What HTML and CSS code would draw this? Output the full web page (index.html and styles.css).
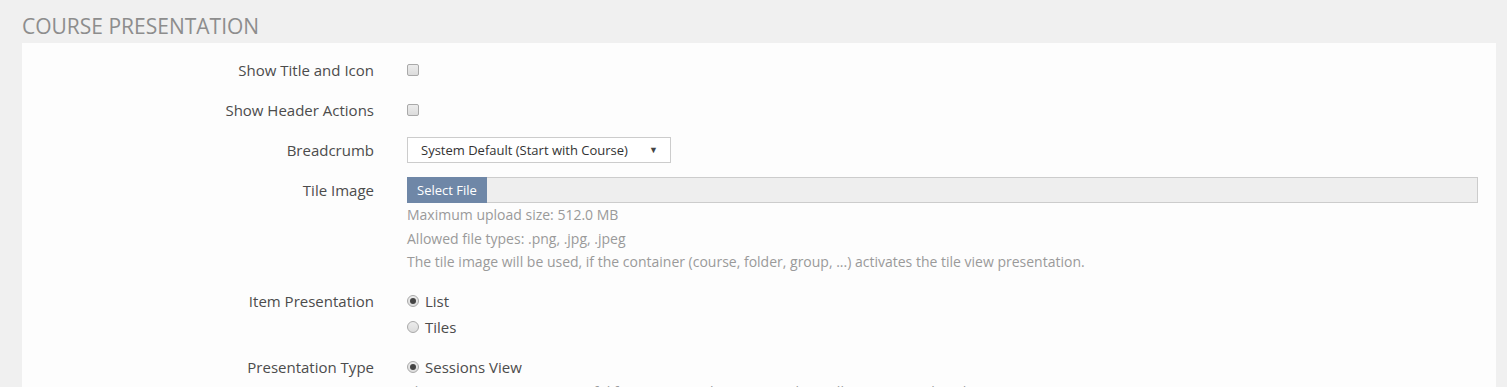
FILE: index.html
```html
<!DOCTYPE html>
<html lang="en">
<head>
    <meta charset="UTF-8">
    <title>Course Presentation</title>
    <link rel="stylesheet" href="styles.css">
</head>
<body>
    <div class="page">
        <h2 class="section-title">Course Presentation</h2>
        <div class="panel">
            <div class="form-row">
                <label class="form-label" for="show-title">Show Title and Icon</label>
                <div class="form-control"><input type="checkbox" id="show-title"></div>
            </div>
            <div class="form-row">
                <label class="form-label" for="show-actions">Show Header Actions</label>
                <div class="form-control"><input type="checkbox" id="show-actions"></div>
            </div>
            <div class="form-row">
                <label class="form-label" for="breadcrumb">Breadcrumb</label>
                <div class="form-control">
                    <div class="select-box" id="breadcrumb">
                        <span>System Default (Start with Course)</span>
                        <span class="select-arrow">&#9660;</span>
                    </div>
                </div>
            </div>
            <div class="form-row">
                <label class="form-label">Tile Image</label>
                <div class="form-control">
                    <div class="file-input">
                        <span class="file-button">Select File</span>
                        <span class="file-name"></span>
                    </div>
                    <div class="help">Maximum upload size: 512.0 MB</div>
                    <div class="help">Allowed file types: .png, .jpg, .jpeg</div>
                    <div class="help">The tile image will be used, if the container (course, folder, group, ...) activates the tile view presentation.</div>
                </div>
            </div>
            <div class="form-row">
                <label class="form-label">Item Presentation</label>
                <div class="form-control">
                    <label class="radio"><input type="radio" name="item-pres" checked> List</label>
                    <label class="radio"><input type="radio" name="item-pres"> Tiles</label>
                </div>
            </div>
            <div class="form-row">
                <label class="form-label">Presentation Type</label>
                <div class="form-control">
                    <label class="radio"><input type="radio" name="pres-type" checked> Sessions View</label>
                    <div class="help">This presentation type is useful for courses with sessions, where all sessions are listed.</div>
                </div>
            </div>
        </div>
    </div>
</body>
</html>
```

FILE: styles.css
```css
* {
    margin: 0;
    padding: 0;
    box-sizing: border-box;
}
body {
    font-family: 'Open Sans', sans-serif;
    background-color: #f0f0f0;
    color: #4a4a4a;
    height: 387px;
    overflow: hidden;
}
.page {
    padding: 0 11px 0 22px;
}
.section-title {
    font-size: 21px;
    font-weight: normal;
    text-transform: uppercase;
    color: #8d8d8d;
    line-height: 28px;
    padding-top: 12px;
    padding-bottom: 3px;
}
.panel {
    background-color: #fdfdfd;
    padding: 14px 18px 0 0;
    display: flex;
    flex-direction: column;
    gap: 14px;
}
.form-row {
    display: grid;
    grid-template-columns: 352px 1fr;
    column-gap: 33px;
    align-items: start;
}
.form-label {
    text-align: right;
    font-size: 15px;
    line-height: 26px;
    color: #4c4c4c;
}
.form-control {
    font-size: 15px;
    line-height: 26px;
    min-height: 26px;
}
/* grey rounded controls */
input[type="checkbox"],
input[type="radio"] {
    appearance: none;
    -webkit-appearance: none;
    width: 12px;
    height: 12px;
    border: 1px solid #a9a9a9;
    background: linear-gradient(#ececec, #dcdcdc);
    flex-shrink: 0;
}
input[type="checkbox"] {
    border-radius: 2px;
    margin: 7px 0 0 0;
    vertical-align: top;
}
input[type="radio"] {
    border-radius: 50%;
    margin: 0;
    position: relative;
}
input[type="radio"]:checked::after {
    content: "";
    position: absolute;
    left: 2px;
    top: 2px;
    width: 6px;
    height: 6px;
    border-radius: 50%;
    background-color: #444;
}
.select-box {
    display: flex;
    align-items: center;
    justify-content: space-between;
    width: 264px;
    height: 26px;
    border: 1px solid #cccccc;
    background-color: #ffffff;
    padding: 0 12px 0 13px;
    font-size: 13px;
    color: #333;
}
.select-arrow {
    font-size: 9px;
    color: #444;
}
.file-input {
    display: flex;
    height: 26px;
    border: 1px solid #cccccc;
    border-left: none;
    background-color: #eeeeee;
}
.file-button {
    background-color: #6f87a7;
    color: #ffffff;
    font-size: 13px;
    line-height: 26px;
    padding: 0 10px;
    margin-top: -1px;
    height: 26px;
}
.help {
    font-size: 14px;
    line-height: 23.5px;
    color: #9a9a9a;
}
.radio {
    display: flex;
    align-items: center;
    gap: 6px;
    color: #4c4c4c;
}
```
